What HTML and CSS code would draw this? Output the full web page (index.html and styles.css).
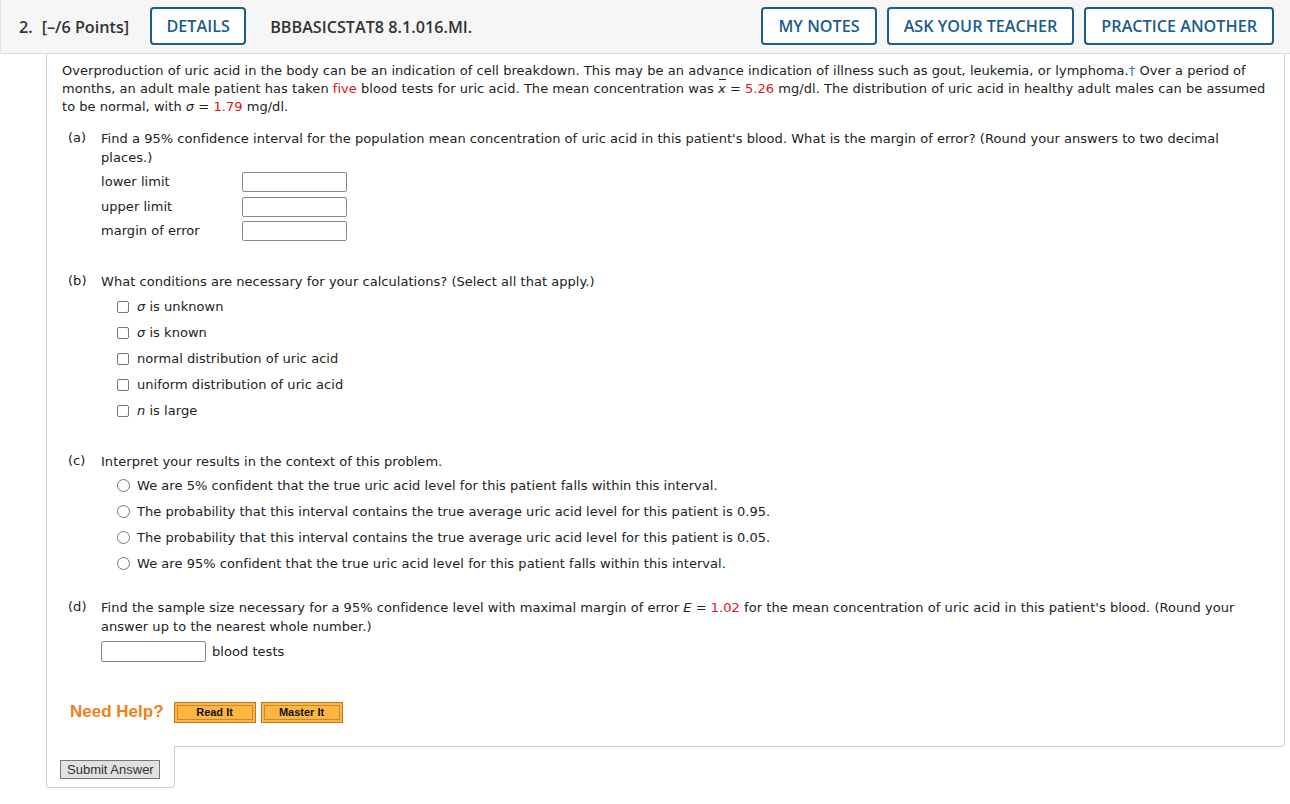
FILE: index.html
```html
<!DOCTYPE html>
<html>
<head>
<meta charset="utf-8">
<link rel="stylesheet" href="styles.css">
</head>
<body>
<div class="header">
  <div class="qnum">2.</div>
  <div class="points">[–/6 Points]</div>
  <div class="btn details">DETAILS</div>
  <div class="code">BBBASICSTAT8 8.1.016.MI.</div>
  <div class="spacer"></div>
  <div class="btn">MY NOTES</div>
  <div class="btn">ASK YOUR TEACHER</div>
  <div class="btn">PRACTICE ANOTHER</div>
</div>
<div class="panel">
  <p class="intro">Overproduction of uric acid in the body can be an indication of cell breakdown. This may be an advance indication of illness such as gout, leukemia, or lymphoma.<span class="dagger">†</span> Over a period of months, an adult male patient has taken <span class="red">five</span> blood tests for uric acid. The mean concentration was <span class="xbar"><i>x</i></span> = <span class="red">5.26</span> mg/dl. The distribution of uric acid in healthy adult males can be assumed to be normal, with <i>σ</i> = <span class="red">1.79</span> mg/dl.</p>

  <div class="part part-a">
    <div class="plabel">(a)</div>
    <div class="pbody">
      <div class="ptext">Find a 95% confidence interval for the population mean concentration of uric acid in this patient's blood. What is the margin of error? (Round your answers to two decimal places.)</div>
      <div class="fields">
        <div class="frow"><span class="flabel">lower limit</span><span class="box"></span></div>
        <div class="frow"><span class="flabel">upper limit</span><span class="box"></span></div>
        <div class="frow"><span class="flabel">margin of error</span><span class="box"></span></div>
      </div>
    </div>
  </div>

  <div class="part part-b">
    <div class="plabel">(b)</div>
    <div class="pbody">
      <div class="ptext">What conditions are necessary for your calculations? (Select all that apply.)</div>
      <div class="choices">
        <div class="choice"><span class="cb"></span><span><i>σ</i> is unknown</span></div>
        <div class="choice"><span class="cb"></span><span><i>σ</i> is known</span></div>
        <div class="choice"><span class="cb"></span><span>normal distribution of uric acid</span></div>
        <div class="choice"><span class="cb"></span><span>uniform distribution of uric acid</span></div>
        <div class="choice"><span class="cb"></span><span><i>n</i> is large</span></div>
      </div>
    </div>
  </div>

  <div class="part part-c">
    <div class="plabel">(c)</div>
    <div class="pbody">
      <div class="ptext">Interpret your results in the context of this problem.</div>
      <div class="choices">
        <div class="choice"><span class="rb"></span><span>We are 5% confident that the true uric acid level for this patient falls within this interval.</span></div>
        <div class="choice"><span class="rb"></span><span>The probability that this interval contains the true average uric acid level for this patient is 0.95.</span></div>
        <div class="choice"><span class="rb"></span><span>The probability that this interval contains the true average uric acid level for this patient is 0.05.</span></div>
        <div class="choice"><span class="rb"></span><span>We are 95% confident that the true uric acid level for this patient falls within this interval.</span></div>
      </div>
    </div>
  </div>

  <div class="part part-d">
    <div class="plabel">(d)</div>
    <div class="pbody">
      <div class="ptext">Find the sample size necessary for a 95% confidence level with maximal margin of error <i>E</i> = <span class="red">1.02</span> for the mean concentration of uric acid in this patient's blood. (Round your answer up to the nearest whole number.)</div>
      <div class="drow"><span class="box"></span><span class="dunit">blood tests</span></div>
    </div>
  </div>

  <div class="help">
    <span class="needhelp">Need Help?</span>
    <span class="hbtn">Read It</span>
    <span class="hbtn">Master It</span>
  </div>
</div>
<div class="submit-tab">
  <span class="submit">Submit Answer</span>
</div>
</body>
</html>
```

FILE: styles.css
```css
html, body {
  margin: 0;
  padding: 0;
  background: #ffffff;
}
body {
  width: 1290px;
  height: 804px;
  overflow: hidden;
  font-family: "DejaVu Sans", Verdana, sans-serif;
  color: #222;
}
.header {
  display: flex;
  align-items: center;
  height: 54px;
  box-sizing: border-box;
  background: #f6f6f6;
  border-bottom: 1px solid #dcdcdc;
  border-left: 1px solid #e2e2e2;
  padding: 0 16px 0 18px;
  font-family: "Open Sans", "Noto Sans", sans-serif;
  font-weight: 600;
  font-size: 16.2px;
  color: #333;
}
.qnum { margin-right: 9px; }
.points { margin-right: 21px; }
.code { margin-left: 24px; }
.spacer { flex: 1; }
.btn {
  height: 38px;
  box-sizing: border-box;
  border: 2px solid #1c5d8c;
  border-radius: 4px;
  color: #1c5d8c;
  display: flex;
  align-items: center;
  justify-content: center;
  padding: 0 15px;
  margin-left: 10px;
  margin-top: -1px;
  background: #fff;
}
.btn.details { margin-left: 0; width: 96px; }
.panel {
  margin-left: 46px;
  width: 1239px;
  box-sizing: border-box;
  border-left: 1px solid #cfcfcf;
  border-right: 1px solid #cfcfcf;
  border-bottom: 1px solid #cfcfcf;
  border-bottom-right-radius: 4px;
  padding: 8px 8px 23px 15px;
  font-size: 13px;
  line-height: 18px;
  letter-spacing: 0.04px;
}
.intro { margin: 0; }
.red { color: #e0121a; }
.dagger { color: #2f6fd6; }
.xbar { position: relative; }
.xbar::before {
  content: "";
  position: absolute;
  left: 1px;
  top: -2px;
  width: 7px;
  height: 1px;
  background: #222;
}
.part {
  display: flex;
  margin-left: 6px;
  padding-right: 14px;
}
.plabel { width: 33px; flex: none; }
.pbody { flex: 1; }
.ptext { line-height: 19px; }
.part-a { margin-top: 13px; }
.fields { margin-top: 3px; }
.frow {
  display: flex;
  align-items: center;
  height: 24.5px;
}
.flabel { width: 141px; }
.box {
  display: inline-block;
  width: 105px;
  height: 20px;
  box-sizing: border-box;
  border: 1px solid #8a8a8a;
  border-radius: 2px;
  background: #fff;
}
.part-b { margin-top: 28px; }
.choices { margin-left: 16px; }
.part-b .choices { margin-top: 3px; }
.part-c .choices { margin-top: 2px; }
.choice {
  display: flex;
  align-items: center;
  height: 26px;
}
.cb {
  width: 12px;
  height: 12px;
  box-sizing: border-box;
  border: 1px solid #767676;
  border-radius: 2px;
  margin-right: 8px;
  background: #fff;
}
.rb {
  width: 13px;
  height: 13px;
  box-sizing: border-box;
  border: 1px solid #767676;
  border-radius: 50%;
  margin-right: 7px;
  background: #fff;
}
.part-c { margin-top: 28px; }
.part-d { margin-top: 21px; }
.drow {
  display: flex;
  align-items: center;
  margin-top: 5px;
  height: 22px;
}
.drow .box { height: 21px; }
.dunit { margin-left: 6px; }
.help {
  display: flex;
  align-items: center;
  margin-top: 39px;
  margin-left: 8px;
}
.needhelp {
  font-family: "Liberation Sans", Arial, sans-serif;
  font-weight: bold;
  font-size: 17px;
  color: #ef7f1a;
  margin-right: 10px;
  letter-spacing: 0;
}
.hbtn {
  font-family: "Liberation Sans", Arial, sans-serif;
  font-weight: bold;
  font-size: 11px;
  color: #111;
  background: #ffb640;
  border: 1px solid #c7741c;
  box-shadow: inset 0 0 0 2px #ffb640, inset 0 0 0 3px #c48a3a;
  width: 82px;
  height: 21px;
  box-sizing: border-box;
  display: flex;
  align-items: center;
  justify-content: center;
  margin-right: 5px;
  line-height: 1;
  letter-spacing: 0;
}
.submit-tab {
  margin-left: 46px;
  margin-top: -1px;
  width: 129px;
  height: 42px;
  box-sizing: border-box;
  border-left: 1px solid #cfcfcf;
  border-right: 1px solid #cfcfcf;
  border-bottom: 1px solid #cfcfcf;
  border-radius: 0 0 4px 4px;
  background: #fff;
  padding: 13px 0 0 13px;
}
.submit {
  display: inline-block;
  font-family: "Liberation Sans", Arial, sans-serif;
  font-size: 13px;
  color: #333;
  background: #e1e1e1;
  border: 1px solid #777;
  padding: 1px 5px 1px 6px;
  line-height: 15px;
}
```
